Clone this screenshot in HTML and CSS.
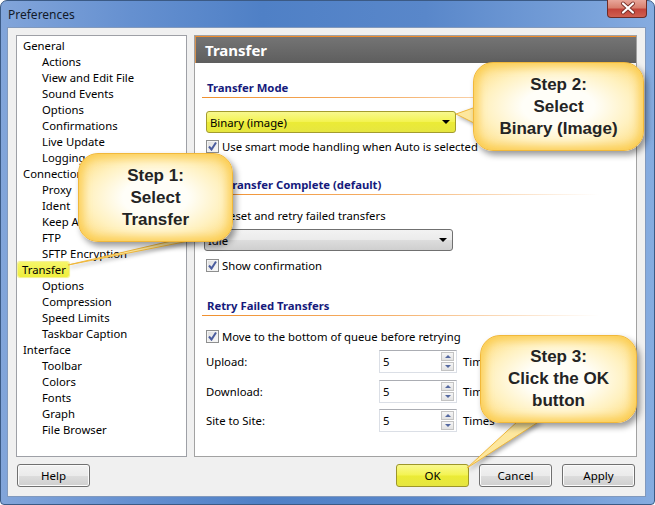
FILE: index.html
```html
<!DOCTYPE html>
<html lang="en">
<head>
    <meta charset="UTF-8">
    <meta name="viewport" content="width=device-width, initial-scale=1.0">
    <title>Preferences</title>
    <link rel="stylesheet" href="styles.css">
</head>
<body>
    <div class="window">
        <div class="titlebar">
            <span class="title">Preferences</span>
            <div class="close">
                <svg width="40" height="18" viewBox="0 0 40 18">
                    <path d="M15 4.5 L25 13.5 M25 4.5 L15 13.5" stroke="#7a3028" stroke-width="4" stroke-linecap="round"/>
                    <path d="M15 4.5 L25 13.5 M25 4.5 L15 13.5" stroke="#ffffff" stroke-width="2.2" stroke-linecap="round"/>
                </svg>
            </div>
        </div>

        <div class="client">
            <div class="panes">
                <!-- category tree -->
                <ul class="tree">
                    <li class="root">General</li>
                    <li class="child">Actions</li>
                    <li class="child">View and Edit File</li>
                    <li class="child">Sound Events</li>
                    <li class="child">Options</li>
                    <li class="child">Confirmations</li>
                    <li class="child">Live Update</li>
                    <li class="child">Logging</li>
                    <li class="root">Connection</li>
                    <li class="child">Proxy</li>
                    <li class="child">Ident</li>
                    <li class="child">Keep Alive</li>
                    <li class="child">FTP</li>
                    <li class="child">SFTP Encryption</li>
                    <li class="root"><span class="selected">Transfer</span></li>
                    <li class="child">Options</li>
                    <li class="child">Compression</li>
                    <li class="child">Speed Limits</li>
                    <li class="child">Taskbar Caption</li>
                    <li class="root">Interface</li>
                    <li class="child">Toolbar</li>
                    <li class="child">Colors</li>
                    <li class="child">Fonts</li>
                    <li class="child">Graph</li>
                    <li class="child">File Browser</li>
                </ul>

                <!-- settings page -->
                <div class="page">
                    <div class="page-header">Transfer</div>
                    <div class="page-body">
                        <div class="section-title first">Transfer Mode</div>
                        <div class="combo combo-hot combo-mode">
                            <span>Binary (image)</span>
                            <span class="arrow"></span>
                        </div>
                        <div class="check check-smart">
                            <span class="box checked"></span>
                            <span>Use smart mode handling when Auto is selected</span>
                        </div>

                        <div class="section-title second">On Transfer Complete (default)</div>
                        <div class="check check-reset">
                            <span class="box"></span>
                            <span>Reset and retry failed transfers</span>
                        </div>
                        <div class="combo combo-idle">
                            <span>Idle</span>
                            <span class="arrow"></span>
                        </div>
                        <div class="check check-confirm">
                            <span class="box checked"></span>
                            <span>Show confirmation</span>
                        </div>

                        <div class="section-title third">Retry Failed Transfers</div>
                        <div class="check check-queue">
                            <span class="box checked"></span>
                            <span>Move to the bottom of queue before retrying</span>
                        </div>
                        <div class="spin-row row-upload">
                            <span class="spin-label">Upload:</span>
                            <div class="spin">
                                <span class="spin-value">5</span>
                                <span class="spin-buttons"><span class="up"></span><span class="down"></span></span>
                            </div>
                            <span class="spin-unit">Times</span>
                        </div>
                        <div class="spin-row row-download">
                            <span class="spin-label">Download:</span>
                            <div class="spin">
                                <span class="spin-value">5</span>
                                <span class="spin-buttons"><span class="up"></span><span class="down"></span></span>
                            </div>
                            <span class="spin-unit">Times</span>
                        </div>
                        <div class="spin-row row-site">
                            <span class="spin-label">Site to Site:</span>
                            <div class="spin">
                                <span class="spin-value">5</span>
                                <span class="spin-buttons"><span class="up"></span><span class="down"></span></span>
                            </div>
                            <span class="spin-unit">Times</span>
                        </div>
                    </div>
                </div>
            </div>

            <div class="buttons">
                <button class="btn">Help</button>
                <span class="spacer"></span>
                <button class="btn btn-hot">OK</button>
                <button class="btn">Cancel</button>
                <button class="btn">Apply</button>
            </div>
        </div>
    </div>

    <!-- callout tails, drawn under the bubbles -->
    <svg class="tails" width="655" height="505" viewBox="0 0 655 505">
        <polygon points="180,239 199,239 68,265" />
        <polygon points="476,107 476,124 456,114" />
        <polygon points="518,421 540,421 467,468" />
    </svg>

    <div class="callout callout-1">Step 1:<br>Select<br>Transfer</div>
    <div class="callout callout-2">Step 2:<br>Select<br>Binary (Image)</div>
    <div class="callout callout-3">Step 3:<br>Click the OK<br>button</div>
</body>
</html>
```

FILE: styles.css
```css
body {
    margin: 0;
    width: 655px;
    height: 505px;
    overflow: hidden;
    position: relative;
    background-color: #ffffff;
    font-family: "Noto Sans", "DejaVu Sans", sans-serif;
    font-size: 11.3px;
    color: #000000;
}

.window {
    box-sizing: border-box;
    height: 505px;
    display: flex;
    flex-direction: column;
    padding: 0 8px 7px 6px;
    border: 1px solid #3b5a85;
    border-radius: 7px 7px 4px 4px;
    background: linear-gradient(to right, #82a5da 0%, #6590d0 20%, #4f80c6 40%, #5987ca 65%, #86ace0 100%);
}

.titlebar {
    height: 26px;
    display: flex;
    align-items: center;
    padding-left: 1px;
}

.title {
    font-size: 12px;
    color: #111a2a;
}

.close {
    margin-left: auto;
    margin-right: -1px;
    margin-top: -1px;
    align-self: flex-start;
    width: 40px;
    height: 18px;
    box-sizing: border-box;
    border: 1px solid #6d2c26;
    border-top: none;
    border-radius: 0 0 4px 4px;
    background: linear-gradient(#e8a69a 0%, #d8806f 45%, #c4443a 55%, #d06050 100%);
}

.close svg {
    display: block;
    margin-top: -1px;
}

.client {
    flex-grow: 1;
    display: flex;
    flex-direction: column;
    padding: 7px 8px 0 8px;
    border: 1px solid #8199bd;
    background-color: #f0f0f0;
}

.panes {
    height: 422px;
    display: flex;
    gap: 7px;
}

/* tree */

.tree {
    box-sizing: border-box;
    width: 171px;
    margin: 0;
    padding: 2px 0 0 0;
    list-style: none;
    background-color: #ffffff;
    border: 1px solid #9ea0a6;
}

.tree li {
    line-height: 16px;
    height: 16px;
    white-space: nowrap;
}

.tree .root {
    padding-left: 6px;
}

.tree .child {
    padding-left: 25px;
}

.selected {
    display: inline-block;
    height: 15px;
    line-height: 15px;
    padding: 0 3px 0 4px;
    margin-left: -5px;
    border-radius: 2px;
    background: linear-gradient(#f6f66a, #eeee3c);
    box-shadow: 0 0 1px 1px #f4f08a;
}

/* page */

.page {
    flex-grow: 1;
    display: flex;
    flex-direction: column;
    border: 1px solid #a2a2a2;
    background-color: #ffffff;
}

.page-header {
    height: 26px;
    line-height: 26px;
    padding-left: 9px;
    border-top: 1px solid #f08c2c;
    border-left: 1px solid #d9924e;
    background: linear-gradient(#747474, #5e5e5e);
    color: #ffffff;
    font-weight: bold;
    font-size: 15px;
}

.page-body {
    padding: 0 16px 0 11px;
}

.section-title {
    margin-left: -4px;
    padding: 0 0 3px 5px;
    line-height: 16px;
    font-weight: bold;
    color: #151a7c;
    background: linear-gradient(to right, #f0902e 0%, #f5b06a 45%, rgba(250, 210, 170, 0) 95%) no-repeat left bottom 1px / 100% 1px;
}

.section-title.first {
    margin-top: 17px;
}

.section-title.second {
    margin-top: 23px;
}

.section-title.third {
    margin-top: 25px;
}

/* combo boxes */

.combo {
    box-sizing: border-box;
    height: 22px;
    display: flex;
    align-items: center;
    justify-content: space-between;
    padding: 0 5px 0 3px;
    border: 1px solid #707070;
    border-radius: 3px;
    background: linear-gradient(#f2f2f2 0%, #ebebeb 50%, #dddddd 51%, #cfcfcf 100%);
}

.combo-hot {
    border-color: #a39c2e;
    background: linear-gradient(#f8f88e 0%, #f3f352 48%, #ebeb36 52%, #e6e640 100%);
}

.combo-mode {
    width: 250px;
    margin-top: 12px;
}

.combo-idle {
    width: 249px;
    margin-top: 6px;
    margin-left: -2px;
}

.arrow {
    width: 0;
    height: 0;
    border-left: 4px solid transparent;
    border-right: 4px solid transparent;
    border-top: 4px solid #000000;
}

/* check boxes */

.check {
    height: 16px;
    display: flex;
    align-items: center;
    gap: 3px;
}

.check-smart {
    margin-top: 5px;
}

.check-reset {
    margin-top: 11px;
}

.check-confirm {
    margin-top: 6px;
}

.check-queue {
    margin-top: 11px;
}

.box {
    box-sizing: border-box;
    width: 13px;
    height: 13px;
    border: 1px solid #8e8f8f;
    background: linear-gradient(135deg, #dcdcdc, #fbfbfb);
    box-shadow: inset 0 0 0 1px #f4f4f4;
}

.box.checked {
    background:
        url("data:image/svg+xml;utf8,<svg xmlns='http://www.w3.org/2000/svg' width='11' height='11'><path d='M2 5.5 L4.5 8.5 L9 1.5' fill='none' stroke='%234a5c9e' stroke-width='2'/></svg>") no-repeat center,
        linear-gradient(135deg, #dcdcdc, #fbfbfb);
}

/* spinners */

.spin-row {
    height: 23px;
    display: flex;
    align-items: center;
}

.row-upload {
    margin-top: 6px;
}

.row-download {
    margin-top: 7px;
}

.row-site {
    margin-top: 6px;
}

.spin-label {
    width: 173px;
}

.spin {
    box-sizing: border-box;
    width: 78px;
    height: 23px;
    display: flex;
    align-items: center;
    justify-content: space-between;
    padding: 1px 2px 1px 3px;
    border: 1px solid #dbdfe6;
    border-top-color: #abadb3;
    background-color: #ffffff;
}

.spin-buttons {
    display: flex;
    flex-direction: column;
    gap: 1px;
}

.spin-buttons span {
    box-sizing: border-box;
    width: 13px;
    height: 9px;
    border: 1px solid #c3c3c3;
    background: linear-gradient(#f6f6f6, #e2e2e2);
    display: flex;
    align-items: center;
    justify-content: center;
}

.spin-buttons .up::after,
.spin-buttons .down::after {
    content: "";
    width: 0;
    height: 0;
    border-left: 3px solid transparent;
    border-right: 3px solid transparent;
}

.spin-buttons .up::after {
    border-bottom: 3px solid #5468a0;
}

.spin-buttons .down::after {
    border-top: 3px solid #5468a0;
}

.spin-unit {
    margin-left: 6px;
}

/* bottom buttons */

.buttons {
    margin-top: 7px;
    height: 23px;
    display: flex;
    gap: 10px;
    padding: 0 2px 0 1px;
}

.spacer {
    flex-grow: 1;
}

.btn {
    width: 73px;
    height: 23px;
    padding: 0;
    font-family: "Noto Sans", "DejaVu Sans", sans-serif;
    font-size: 11.5px;
    color: #000000;
    border: 1px solid #707070;
    border-radius: 3px;
    background: linear-gradient(#f2f2f2 0%, #ebebeb 50%, #dddddd 51%, #cfcfcf 100%);
    box-shadow: inset 0 0 0 1px #fbfbfb;
}

.btn-hot {
    border-color: #9d962a;
    background: linear-gradient(#f8f88e 0%, #f3f352 48%, #ebeb36 52%, #e6e640 100%);
    box-shadow: none;
}

/* callouts */

.tails {
    position: absolute;
    left: 0;
    top: 0;
    filter: drop-shadow(2px 2px 2px rgba(0, 0, 0, 0.35));
}

.tails polygon {
    fill: #fde79e;
    stroke: #efb73c;
    stroke-width: 1;
}

.callout {
    position: absolute;
    box-sizing: border-box;
    display: flex;
    align-items: center;
    justify-content: center;
    text-align: center;
    border: 1px solid #f1b83a;
    border-radius: 20px;
    background: radial-gradient(ellipse at center, #fffef8 30%, #fff1c0 62%, #fdd870 100%);
    box-shadow: inset 0 0 9px 4px rgba(250, 200, 70, 0.8), 3px 4px 6px rgba(0, 0, 0, 0.4);
    font-family: "Liberation Sans", Arial, sans-serif;
    font-weight: bold;
    font-size: 17px;
    line-height: 22px;
    color: #242424;
}

.callout-1 {
    left: 78px;
    top: 153px;
    width: 155px;
    height: 89px;
}

.callout-2 {
    left: 473px;
    top: 62px;
    width: 171px;
    height: 89px;
}

.callout-3 {
    left: 480px;
    top: 335px;
    width: 157px;
    height: 88px;
}
```
